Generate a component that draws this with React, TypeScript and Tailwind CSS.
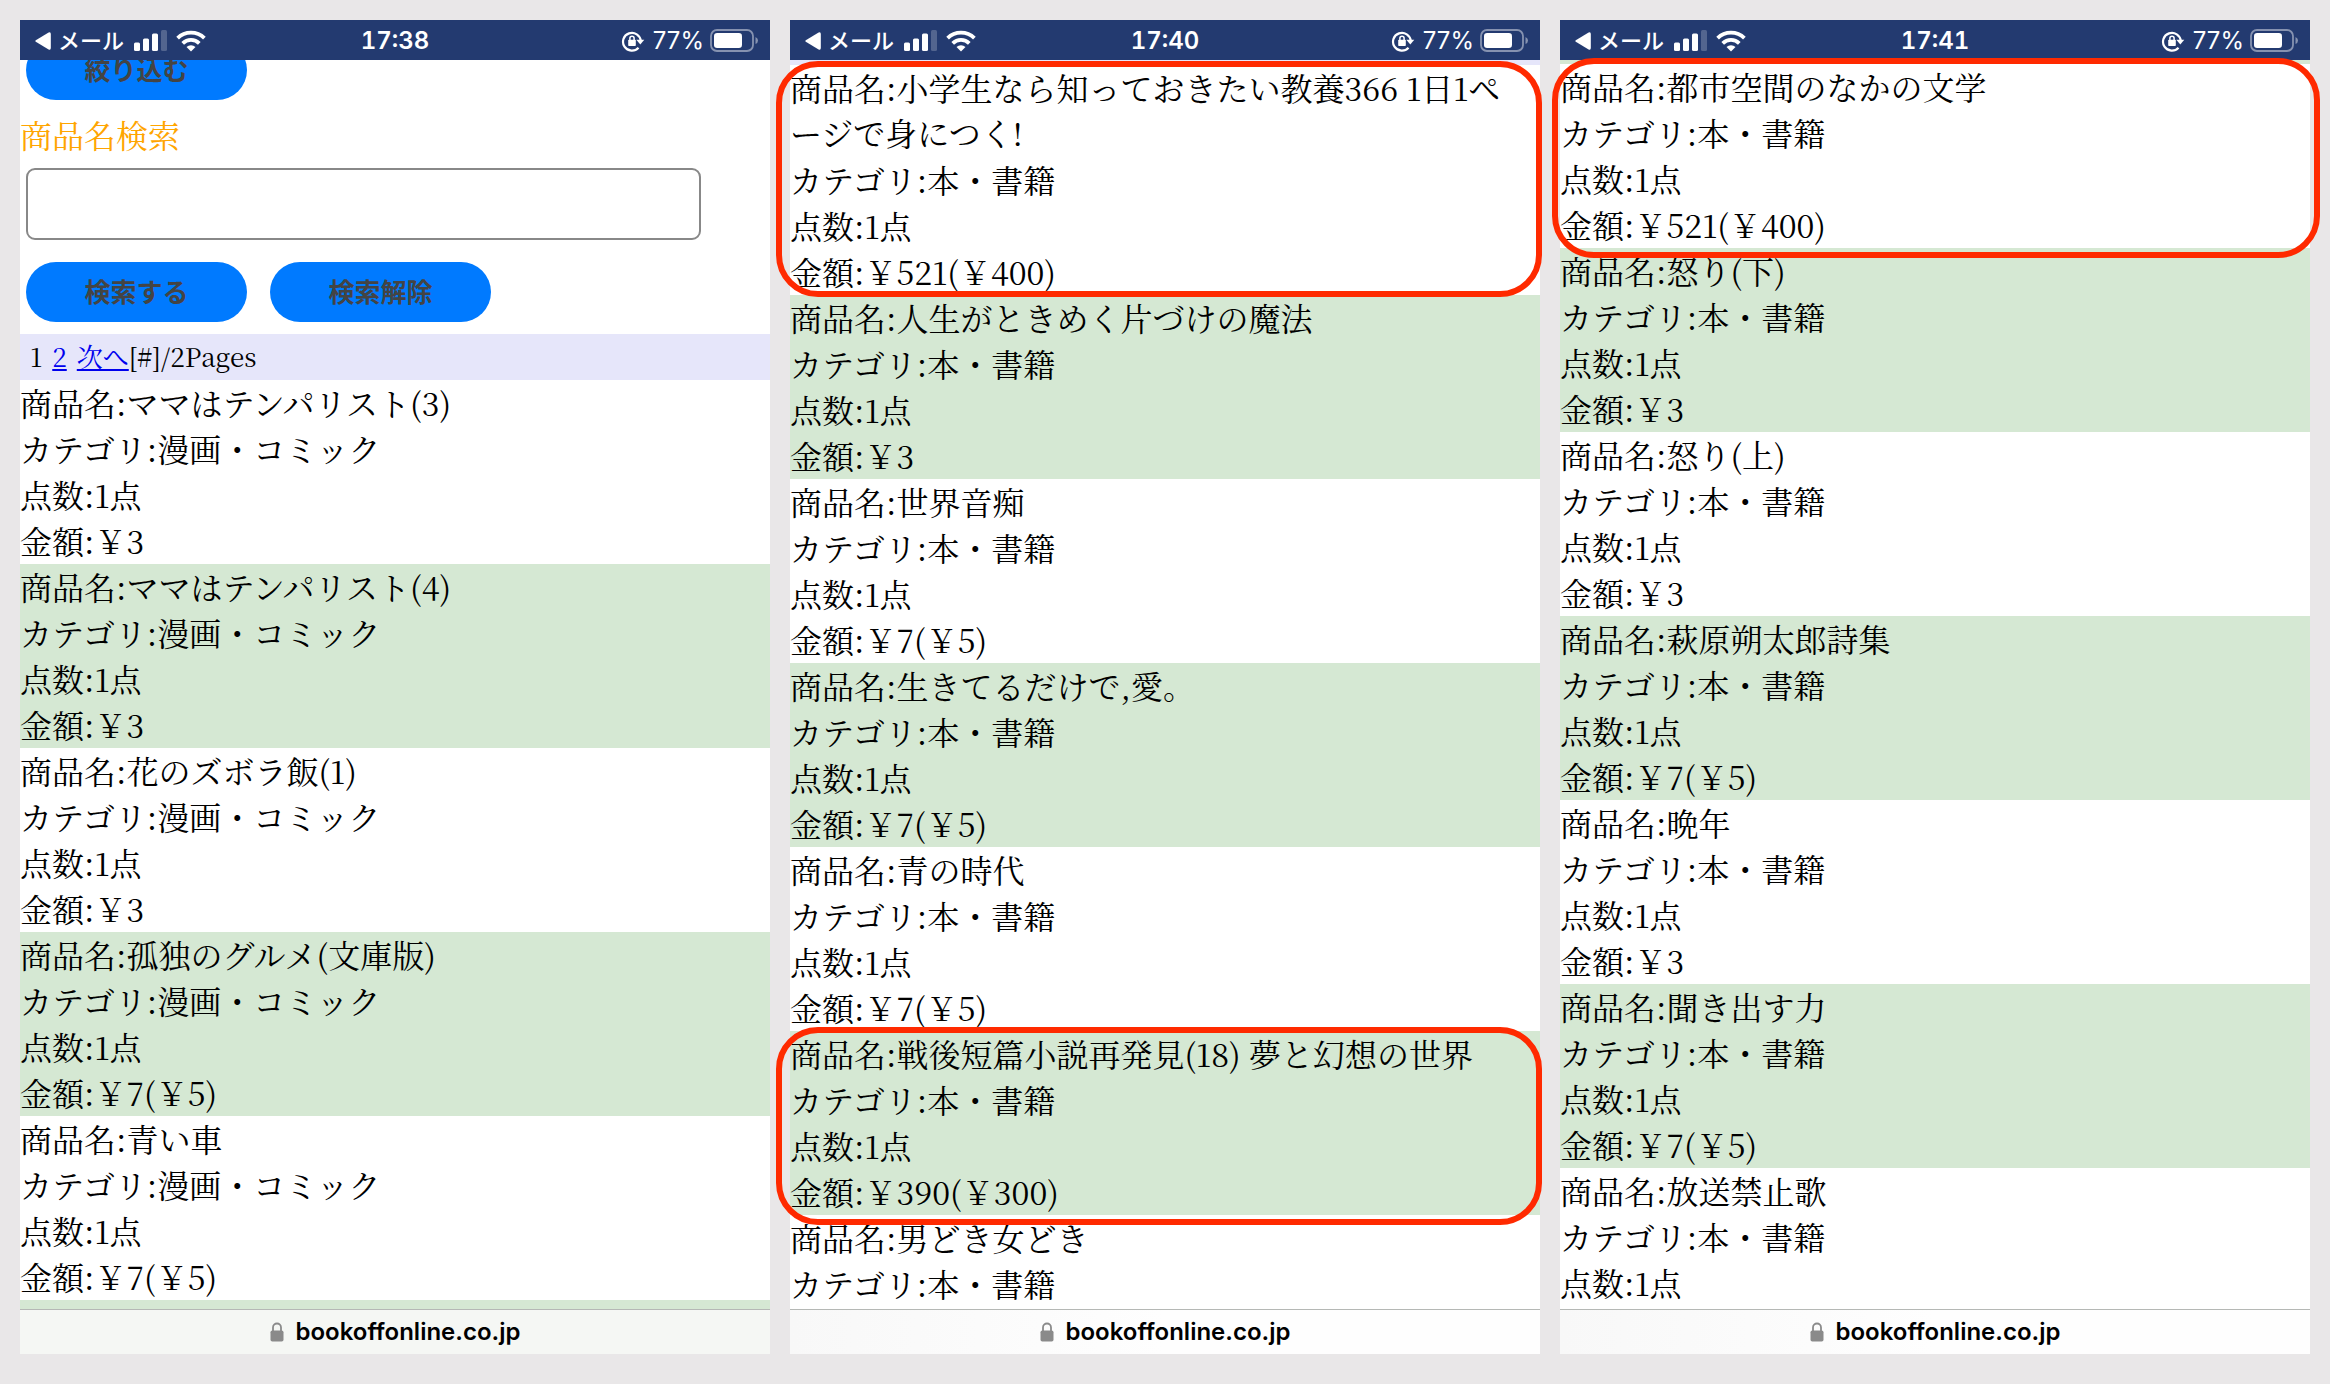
import type { ReactNode } from "react";

type Product = {
  name: string;
  wraps?: boolean;
  category?: string;
  count?: string;
  price?: string;
  marked?: string;
};

const COMIC = "漫画・コミック";
const BOOK = "本・書籍";

const first: Product[] = [
  { name: "ママはテンパリスト(3)", category: COMIC, count: "1点", price: "￥3" },
  { name: "ママはテンパリスト(4)", category: COMIC, count: "1点", price: "￥3" },
  { name: "花のズボラ飯(1)", category: COMIC, count: "1点", price: "￥3" },
  { name: "孤独のグルメ(文庫版)", category: COMIC, count: "1点", price: "￥7(￥5)" },
  { name: "青い車", category: COMIC, count: "1点", price: "￥7(￥5)" },
];

const second: Product[] = [
  {
    name: "小学生なら知っておきたい教養366 1日1ページで身につく!",
    wraps: true,
    category: BOOK,
    count: "1点",
    price: "￥521(￥400)",
    marked: "-top-1 -bottom-0.5 -left-3.5 -right-0.5",
  },
  { name: "人生がときめく片づけの魔法", category: BOOK, count: "1点", price: "￥3" },
  { name: "世界音痴", category: BOOK, count: "1点", price: "￥7(￥5)" },
  { name: "生きてるだけで,愛。", category: BOOK, count: "1点", price: "￥7(￥5)" },
  { name: "青の時代", category: BOOK, count: "1点", price: "￥7(￥5)" },
  {
    name: "戦後短篇小説再発見(18) 夢と幻想の世界",
    category: BOOK,
    count: "1点",
    price: "￥390(￥300)",
    marked: "-top-1 -bottom-2.5 -left-3.5 -right-0.5",
  },
  { name: "男どき女どき", category: BOOK },
];

const third: Product[] = [
  {
    name: "都市空間のなかの文学",
    category: BOOK,
    count: "1点",
    price: "￥521(￥400)",
    marked: "-top-1.5 -bottom-2.5 -left-2 -right-2.5",
  },
  { name: "怒り(下)", category: BOOK, count: "1点", price: "￥3" },
  { name: "怒り(上)", category: BOOK, count: "1点", price: "￥3" },
  { name: "萩原朔太郎詩集", category: BOOK, count: "1点", price: "￥7(￥5)" },
  { name: "晩年", category: BOOK, count: "1点", price: "￥3" },
  { name: "聞き出す力", category: BOOK, count: "1点", price: "￥7(￥5)" },
  { name: "放送禁止歌", category: BOOK, count: "1点" },
];

function StatusBar({ time }: { time: string }) {
  return (
    <header className="relative z-10 grid h-10 grid-cols-3 items-center bg-[#233a70] pt-0.5 font-['Inter','Noto_Sans_CJK_JP',sans-serif] text-2xl leading-8 text-white">
      <div className="flex items-center pl-3.5">
        <svg className="h-5 w-[18px]" viewBox="0 0 18 20" fill="currentColor" aria-hidden="true">
          <path d="M1.800 9.200 14.600 1.600Q16.800.6 16.800 3v14q0 2.400-2.200 1.400L1.800 10.800Q.6 10 1.800 9.200Z" />
        </svg>
        <button type="button" className="ml-1.5 text-[22px] font-medium">メール</button>
        <svg className="ml-2.5 h-[22px] w-[34px]" viewBox="0 0 34 22" fill="currentColor" aria-hidden="true">
          <rect x="0" y="12.500" width="6" height="8.500" rx="1.500" />
          <rect x="9" y="8.500" width="6" height="12.500" rx="1.500" />
          <rect x="18" y="3.500" width="6" height="17.500" rx="1.500" />
          <rect x="27" y="0" width="6" height="21" rx="1.500" opacity="0.220" />
        </svg>
        <svg className="ml-2 h-[22px] w-[30px]" viewBox="0 0 30 22" fill="none" stroke="currentColor" strokeWidth="3.800" aria-hidden="true">
          <path d="M1.600 8.100a19.200 19.200 0 0 1 26.800 0" />
          <path d="M6.700 13.300a12 12 0 0 1 16.600 0" />
          <path d="M15 21.500 10.500 17a6.500 6.500 0 0 1 9 0Z" fill="currentColor" stroke="none" />
        </svg>
      </div>
      <time className="text-center font-semibold tabular-nums">{time}</time>
      <div className="flex items-center justify-end pr-3">
        <svg className="h-[22px] w-6" viewBox="0 0 24 22" fill="none" aria-hidden="true">
          <path d="M17.500 17.800A8.900 8.900 0 1 1 19.800 11" stroke="currentColor" strokeWidth="2.200" />
          <path d="M15.300 9.800h8L19.300 14.600Z" fill="currentColor" />
          <rect x="7.200" y="9.800" width="7.600" height="6.200" rx="0.800" fill="currentColor" />
          <path d="M8.900 10V8.300a2.100 2.100 0 0 1 4.200 0V10" stroke="currentColor" strokeWidth="1.500" />
        </svg>
        <span className="ml-2">77%</span>
        <svg className="ml-1.5 h-6 w-12" viewBox="0 0 48 24" fill="none" aria-hidden="true">
          <rect x="1" y="1" width="42" height="21" rx="6" stroke="currentColor" strokeWidth="1.800" opacity="0.450" />
          <rect x="4" y="4" width="28" height="15" rx="3.200" fill="currentColor" />
          <path d="M45.500 8q2.500 1 2.500 3.500t-2.500 3.500Z" fill="currentColor" opacity="0.450" />
        </svg>
      </div>
    </header>
  );
}

function AddressBar({ tone }: { tone: string }) {
  return (
    <footer
      className={`flex h-[45px] items-center justify-center gap-3 border-t border-[#b5b8b5] font-['Inter',sans-serif] text-2xl font-semibold text-black ${tone}`}
    >
      <svg className="h-5 w-[14px]" viewBox="0 0 14 20" fill="none" aria-hidden="true">
        <rect x="0.500" y="8.500" width="13" height="11" rx="1.800" fill="#8a8a8a" />
        <path d="M3 9V5.500a4 4 0 0 1 8 0V9" stroke="#8a8a8a" strokeWidth="1.800" />
      </svg>
      <span>bookoffonline.co.jp</span>
    </footer>
  );
}

function Line({ text, wraps = false }: { text: string; wraps?: boolean }) {
  return <p className={`pr-3 pb-0.5 break-all ${wraps ? "leading-[45px]" : "leading-[44px]"}`}>{text}</p>;
}

function ProductList({ products }: { products: Product[] }) {
  return (
    <ul>
      {products.map((p) => (
        <li key={p.name} className="relative even:bg-[#d5e8d3]">
          <Line text={`商品名:${p.name}`} wraps={p.wraps} />
          {p.category && <Line text={`カテゴリ:${p.category}`} />}
          {p.count && <Line text={`点数:${p.count}`} />}
          {p.price && <Line text={`金額:${p.price}`} />}
          {p.marked && (
            <span
              aria-hidden="true"
              className={`pointer-events-none absolute z-20 rounded-[42px] border-[6px] border-[#ff2a00] ${p.marked}`}
            />
          )}
        </li>
      ))}
    </ul>
  );
}

function Phone({ time, tone, children }: { time: string; tone: string; children: ReactNode }) {
  return (
    <section className="flex min-w-0 flex-col bg-white">
      <StatusBar time={time} />
      <main className="flex grow flex-col font-['Noto_Serif_CJK_JP','Liberation_Serif','Noto_Sans_CJK_JP',serif] text-[32px] leading-[44px] text-black [line-break:anywhere]">
        {children}
      </main>
      <AddressBar tone={tone} />
    </section>
  );
}

function PillButton({ children }: { children: ReactNode }) {
  return (
    <button
      type="button"
      className="h-[60px] w-[221px] rounded-[30px] bg-[#007aff] pb-0.5 font-['Noto_Sans_CJK_JP',sans-serif] text-[26px] leading-9 font-bold text-[#444444]"
    >
      {children}
    </button>
  );
}

export default function App() {
  return (
    <div lang="ja" className="grid min-h-screen grid-cols-3 gap-5 bg-[#e9e7e8] px-5 pt-5 pb-[30px]">
      <Phone time="17:38" tone="bg-[#f5f7f4]">
        <form className="-mt-5 flex flex-col pb-3" onSubmit={(e) => e.preventDefault()}>
          <div className="flex pl-1.5">
            <PillButton>絞り込む</PillButton>
          </div>
          <label htmlFor="keyword" className="mt-3 pb-1 text-[#ffa500]">
            商品名検索
          </label>
          <input
            id="keyword"
            type="text"
            className="mt-2 ml-1.5 h-[72px] w-[90%] rounded-[9px] border-2 border-[#888888] bg-white px-3"
          />
          <div className="mt-[22px] flex gap-[23px] pl-1.5">
            <PillButton>検索する</PillButton>
            <PillButton>検索解除</PillButton>
          </div>
        </form>
        <nav className="flex gap-2.5 bg-[#e6e6fa] pb-0.5 pl-2.5 text-[26px]">
          <span>1</span>
          <a href="#page-2" className="text-[#0000ee] underline">2</a>
          <span>
            <a href="#next" className="text-[#0000ee] underline">次へ</a>[#]/2Pages
          </span>
        </nav>
        <ProductList products={first} />
        <div className="grow bg-[#d5e8d3]" />
      </Phone>
      <Phone time="17:40" tone="bg-linear-to-r from-[#f8f8f8] to-[#fefefe] to-50%">
        <div className="h-[5px] bg-[#e6e6fa]" />
        <ProductList products={second} />
      </Phone>
      <Phone time="17:41" tone="bg-linear-to-r from-[#f8f8f8] to-[#fefefe] to-50%">
        <div className="h-1 bg-[#d5e8d3]" />
        <ProductList products={third} />
      </Phone>
    </div>
  );
}
